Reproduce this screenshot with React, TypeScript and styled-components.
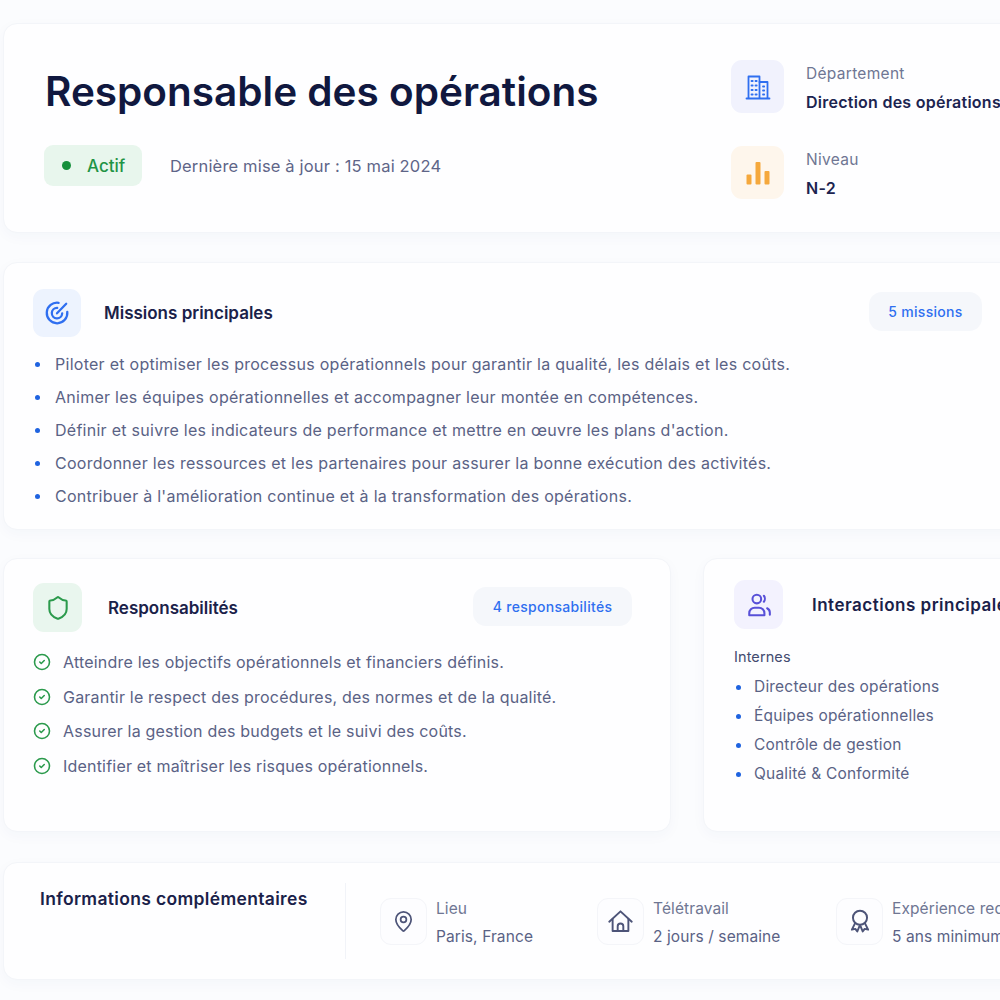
import styled, { createGlobalStyle } from "styled-components";
import { CircleCheck, MapPin, Shield } from "lucide-react";

const GlobalStyle = createGlobalStyle`
  html, body {
    margin: 0;
    background: #fbfcfe;
  }
  body {
    font-family: Inter, "Liberation Sans", sans-serif;
    color: #5a6285;
  }
`;

const Page = styled.div`
  width: 1000px;
  height: 1000px;
  overflow: hidden;
  box-sizing: border-box;
  padding: 23px 0 0 3px;
  display: flex;
  flex-direction: column;
  gap: 29px;
`;

const Card = styled.section`
  box-sizing: border-box;
  background: #fefeff;
  border: 1px solid #f3f5f9;
  border-radius: 14px;
  box-shadow: 0 4px 14px rgba(40, 60, 120, 0.03);
`;

const Hero = styled(Card)`
  width: 1040px;
  height: 210px;
  flex: none;
  display: flex;
  padding: 38px 0 0 41px;
`;

const HeroMain = styled.div`
  width: 686px;
  flex: none;
`;

const Title = styled.h1`
  margin: 0;
  font-size: 40.5px;
  line-height: 60px;
  font-weight: 600;
  color: #10183f;
`;

const StatusRow = styled.div`
  display: flex;
  align-items: center;
  gap: 28px;
  margin: 23px 0 0 -1px;
`;

const StatusBadge = styled.div`
  width: 98px;
  height: 41px;
  box-sizing: border-box;
  padding-left: 18px;
  display: flex;
  align-items: center;
  gap: 16px;
  border-radius: 9px;
  background: #e8f6ed;
  color: #1f9445;
  font-size: 17px;
  font-weight: 500;
`;

const StatusDot = styled.span`
  width: 9px;
  height: 9px;
  border-radius: 50%;
  background: #16903c;
`;

const Updated = styled.span`
  font-size: 16.5px;
  letter-spacing: 0.17px;
  color: #5e6588;
`;

const HeroFacts = styled.div`
  display: flex;
  flex-direction: column;
  gap: 33px;
  margin-top: -2px;
`;

const Fact = styled.div`
  display: flex;
  align-items: center;
  gap: 22px;
`;

const FactText = styled.div`
  padding-top: 2px;
`;

const IconTile = styled.div<{ $bg: string; $color: string; $size?: number }>`
  width: ${(p) => p.$size ?? 53}px;
  height: ${(p) => p.$size ?? 53}px;
  flex: none;
  display: flex;
  align-items: center;
  justify-content: center;
  border-radius: 11px;
  background: ${(p) => p.$bg};
  color: ${(p) => p.$color};
`;

const FactLabel = styled.div`
  font-size: 15.5px;
  line-height: 20px;
  letter-spacing: 0.3px;
  color: #6f7693;
`;

const FactValue = styled.div`
  margin-top: 8px;
  font-size: 16px;
  line-height: 20px;
  letter-spacing: 0.25px;
  font-weight: 600;
  color: #1c2450;
  white-space: nowrap;
`;

const Missions = styled(Card)`
  width: 1040px;
  height: 268px;
  flex: none;
  padding: 26px 0 0 29px;
`;

const CardHeader = styled.div<{ $gap: number; $width: number }>`
  width: ${(p) => p.$width}px;
  display: flex;
  align-items: center;
  gap: ${(p) => p.$gap}px;
`;

const CardTitle = styled.h2`
  margin: 0;
  flex: 1;
  font-size: 17px;
  font-weight: 600;
  color: #1a2149;
  white-space: nowrap;
`;

const WideCardTitle = styled(CardTitle)`
  letter-spacing: 0.5px;
`;

const CountPill = styled.span<{ $width: number }>`
  width: ${(p) => p.$width}px;
  height: 39px;
  flex: none;
  margin-top: -3px;
  display: flex;
  align-items: center;
  justify-content: center;
  border-radius: 13px;
  background: #f5f7fb;
  color: #2f6ff0;
  font-size: 14px;
  letter-spacing: 0.3px;
  font-weight: 500;
`;

const BulletList = styled.ul<{ $gap: number; $top: number; $fontSize: number; $tracking: number; $indent: number }>`
  list-style: none;
  margin: ${(p) => p.$top}px 0 0;
  padding: 0;
  display: flex;
  flex-direction: column;
  gap: ${(p) => p.$gap}px;
  font-size: ${(p) => p.$fontSize}px;
  letter-spacing: ${(p) => p.$tracking}px;
  line-height: 20px;
  color: #5a6285;

  li {
    display: flex;
    align-items: center;
    gap: ${(p) => p.$indent}px;
    white-space: nowrap;
  }

  li::before {
    content: "";
    width: 5px;
    height: 5px;
    flex: none;
    margin-left: 2px;
    border-radius: 50%;
    background: #1f63e0;
  }
`;

const MiddleRow = styled.div`
  display: flex;
  gap: 32px;
  flex: none;
  width: 1040px;
  height: 275px;
  margin-top: -1px;
`;

const Responsibilities = styled(Card)`
  width: 668px;
  height: 274px;
  flex: none;
  padding: 24px 0 0 29px;
`;

const Interactions = styled(Card)`
  flex: 1;
  height: 274px;
  padding: 21px 0 0 30px;
`;

const CheckList = styled.ul`
  list-style: none;
  margin: 20px 0 0;
  padding: 0;
  display: flex;
  flex-direction: column;
  gap: 14.7px;
  font-size: 16px;
  letter-spacing: 0.2px;
  line-height: 20px;
  color: #5a6285;

  li {
    display: flex;
    align-items: center;
    gap: 12px;
    white-space: nowrap;
  }

  svg {
    color: #2b9a4c;
    flex: none;
  }
`;

const SubHeading = styled.div`
  margin-top: 18px;
  font-size: 14.5px;
  line-height: 20px;
  letter-spacing: 0.1px;
  color: #434b70;
`;

const Extras = styled(Card)`
  width: 1040px;
  height: 118px;
  flex: none;
  display: flex;
  padding-top: 20px;
`;

const ExtrasTitle = styled.h2`
  width: 342px;
  height: 76px;
  flex: none;
  box-sizing: border-box;
  margin: 0;
  padding: 4px 0 0 36px;
  border-right: 1px solid #f1f3f8;
  font-size: 17.5px;
  line-height: 24px;
  letter-spacing: 0.33px;
  font-weight: 600;
  color: #1a2149;
`;

const InfoItem = styled.div<{ $left: number; $width: number }>`
  width: ${(p) => p.$width}px;
  flex: none;
  box-sizing: border-box;
  padding-left: ${(p) => p.$left}px;
  display: flex;
  align-items: center;
  gap: 9px;
  height: 76px;
`;

const InfoText = styled.div`
  padding-top: 4px;
`;

const InfoTile = styled(IconTile)`
  border: 1px solid #f4f5f9;
  background: #fdfdff;
`;

const InfoLabel = styled.div`
  font-size: 15.5px;
  line-height: 20px;
  letter-spacing: 0.1px;
  color: #6f7693;
  white-space: nowrap;
`;

const InfoValue = styled.div`
  margin-top: 8px;
  font-size: 15.5px;
  line-height: 20px;
  letter-spacing: 0.1px;
  color: #5a6285;
  white-space: nowrap;
`;

const BuildingIcon = () => (
  <svg width="26" height="26" viewBox="0 0 26 26" fill="none" stroke="currentColor" strokeWidth="1.8" strokeLinecap="round" strokeLinejoin="round">
    <path d="M1.5 24.5h23" />
    <path d="M3.5 24V2.5h11V24" />
    <path d="M14.5 8H22.5v16" />
    <path d="M6.5 7h1.2M10.5 7h1.2M6.5 11.5h1.2M10.5 11.5h1.2M6.5 16h1.2M10.5 16h1.2M6.5 20.5h1.2M10.5 20.5h1.2M18 12.5h1.2M18 16.5h1.2M18 20.5h1.2" />
  </svg>
);

const BarsIcon = () => (
  <svg width="24" height="24" viewBox="0 0 24 24" fill="#f5a83c">
    <rect x="0.5" y="13.5" width="5" height="10" rx="1" />
    <rect x="9.5" y="1" width="5" height="22.5" rx="1" />
    <rect x="18.5" y="10" width="5" height="13.5" rx="1" />
  </svg>
);

const TargetIcon = () => (
  <svg width="26" height="26" viewBox="0 0 24 24" fill="none" stroke="currentColor" strokeWidth="2.1" strokeLinecap="round" strokeLinejoin="round">
    <path d="M21.5 11a9.5 9.5 0 1 1-8-8.4" />
    <path d="M16.8 12.3a4.8 4.8 0 1 1-4.6-5" />
    <path d="M12 12.3 20.5 3.5" />
  </svg>
);

const PeopleIcon = () => (
  <svg width="26" height="26" viewBox="0 0 24 24" fill="none" stroke="currentColor" strokeWidth="1.9" strokeLinecap="round" strokeLinejoin="round">
    <circle cx="10" cy="6.5" r="4" />
    <path d="M3 21.5v-2a5 5 0 0 1 5-5h4a5 5 0 0 1 5 5v2z" />
    <path d="M16.5 3.5c1.2 1.4 1.2 4 0 5.5" />
    <path d="M22 21v-2a4.5 4.5 0 0 0-2.5-4" />
  </svg>
);

const HomeIcon = () => (
  <svg width="27" height="27" viewBox="0 0 24 24" fill="none" stroke="currentColor" strokeWidth="1.7" strokeLinecap="round" strokeLinejoin="round">
    <path d="M2 12.2 12 3l10 9.2" />
    <path d="M5 10v10.5h14V10" />
    <path d="M9.5 20.5v-4.2a2.5 2.5 0 0 1 5 0v4.2" />
  </svg>
);

const RibbonIcon = () => (
  <svg width="26" height="26" viewBox="0 0 24 24" fill="none" stroke="currentColor" strokeWidth="1.8" strokeLinecap="round" strokeLinejoin="round">
    <circle cx="12" cy="9" r="6.5" />
    <path d="M7.5 14 4.5 20l3.2-.7 1.8 2.4 2-5" />
    <path d="M16.5 14l3 6-3.2-.7-1.8 2.4-2-5" />
  </svg>
);

const missions = [
  "Piloter et optimiser les processus opérationnels pour garantir la qualité, les délais et les coûts.",
  "Animer les équipes opérationnelles et accompagner leur montée en compétences.",
  "Définir et suivre les indicateurs de performance et mettre en œuvre les plans d'action.",
  "Coordonner les ressources et les partenaires pour assurer la bonne exécution des activités.",
  "Contribuer à l'amélioration continue et à la transformation des opérations.",
];

const responsibilities = [
  "Atteindre les objectifs opérationnels et financiers définis.",
  "Garantir le respect des procédures, des normes et de la qualité.",
  "Assurer la gestion des budgets et le suivi des coûts.",
  "Identifier et maîtriser les risques opérationnels.",
];

const internes = [
  "Directeur des opérations",
  "Équipes opérationnelles",
  "Contrôle de gestion",
  "Qualité & Conformité",
];

const App = () => (
  <>
    <GlobalStyle />
    <Page>
      <Hero>
        <HeroMain>
          <Title>Responsable des opérations</Title>
          <StatusRow>
            <StatusBadge>
              <StatusDot />
              Actif
            </StatusBadge>
            <Updated>Dernière mise à jour : 15 mai 2024</Updated>
          </StatusRow>
        </HeroMain>
        <HeroFacts>
          <Fact>
            <IconTile $bg="#f1f2fd" $color="#2f6ff0">
              <BuildingIcon />
            </IconTile>
            <FactText>
              <FactLabel>Département</FactLabel>
              <FactValue>Direction des opérations</FactValue>
            </FactText>
          </Fact>
          <Fact>
            <IconTile $bg="#fef6ec" $color="#f5a83c">
              <BarsIcon />
            </IconTile>
            <FactText>
              <FactLabel>Niveau</FactLabel>
              <FactValue>N-2</FactValue>
            </FactText>
          </Fact>
        </HeroFacts>
      </Hero>

      <Missions>
        <CardHeader $gap={23} $width={949}>
          <IconTile $bg="#edf3fe" $color="#2f6ff0" $size={48}>
            <TargetIcon />
          </IconTile>
          <CardTitle>Missions principales</CardTitle>
          <CountPill $width={113}>5 missions</CountPill>
        </CardHeader>
        <BulletList $gap={13} $top={17} $fontSize={16} $tracking={0.27} $indent={15}>
          {missions.map((text) => (
            <li key={text}>{text}</li>
          ))}
        </BulletList>
      </Missions>

      <MiddleRow>
        <Responsibilities>
          <CardHeader $gap={26} $width={599}>
            <IconTile $bg="#e9f6ee" $color="#2b9a4c" $size={49}>
              <Shield size={26} strokeWidth={1.9} />
            </IconTile>
            <CardTitle>Responsabilités</CardTitle>
            <CountPill $width={159}>4 responsabilités</CountPill>
          </CardHeader>
          <CheckList>
            {responsibilities.map((text) => (
              <li key={text}>
                <CircleCheck size={18} strokeWidth={2.1} />
                {text}
              </li>
            ))}
          </CheckList>
        </Responsibilities>

        <Interactions>
          <CardHeader $gap={29} $width={300}>
            <IconTile $bg="#f3f2fe" $color="#5850d8" $size={49}>
              <PeopleIcon />
            </IconTile>
            <WideCardTitle>Interactions principales</WideCardTitle>
          </CardHeader>
          <SubHeading>Internes</SubHeading>
          <BulletList $gap={9} $top={10} $fontSize={15.5} $tracking={0.2} $indent={13}>
            {internes.map((text) => (
              <li key={text}>{text}</li>
            ))}
          </BulletList>
        </Interactions>
      </MiddleRow>

      <Extras>
        <ExtrasTitle>Informations complémentaires</ExtrasTitle>
        <InfoItem $left={34} $width={251}>
          <InfoTile $bg="#fdfdff" $color="#4d5478" $size={45}>
            <MapPin size={23} strokeWidth={1.8} />
          </InfoTile>
          <InfoText>
            <InfoLabel>Lieu</InfoLabel>
            <InfoValue>Paris, France</InfoValue>
          </InfoText>
        </InfoItem>
        <InfoItem $left={0} $width={239}>
          <InfoTile $bg="#fdfdff" $color="#4d5478" $size={45}>
            <HomeIcon />
          </InfoTile>
          <InfoText>
            <InfoLabel>Télétravail</InfoLabel>
            <InfoValue>2 jours / semaine</InfoValue>
          </InfoText>
        </InfoItem>
        <InfoItem $left={0} $width={240}>
          <InfoTile $bg="#fdfdff" $color="#4d5478" $size={45}>
            <RibbonIcon />
          </InfoTile>
          <InfoText>
            <InfoLabel>Expérience requise</InfoLabel>
            <InfoValue>5 ans minimum</InfoValue>
          </InfoText>
        </InfoItem>
      </Extras>
    </Page>
  </>
);

export default App;
